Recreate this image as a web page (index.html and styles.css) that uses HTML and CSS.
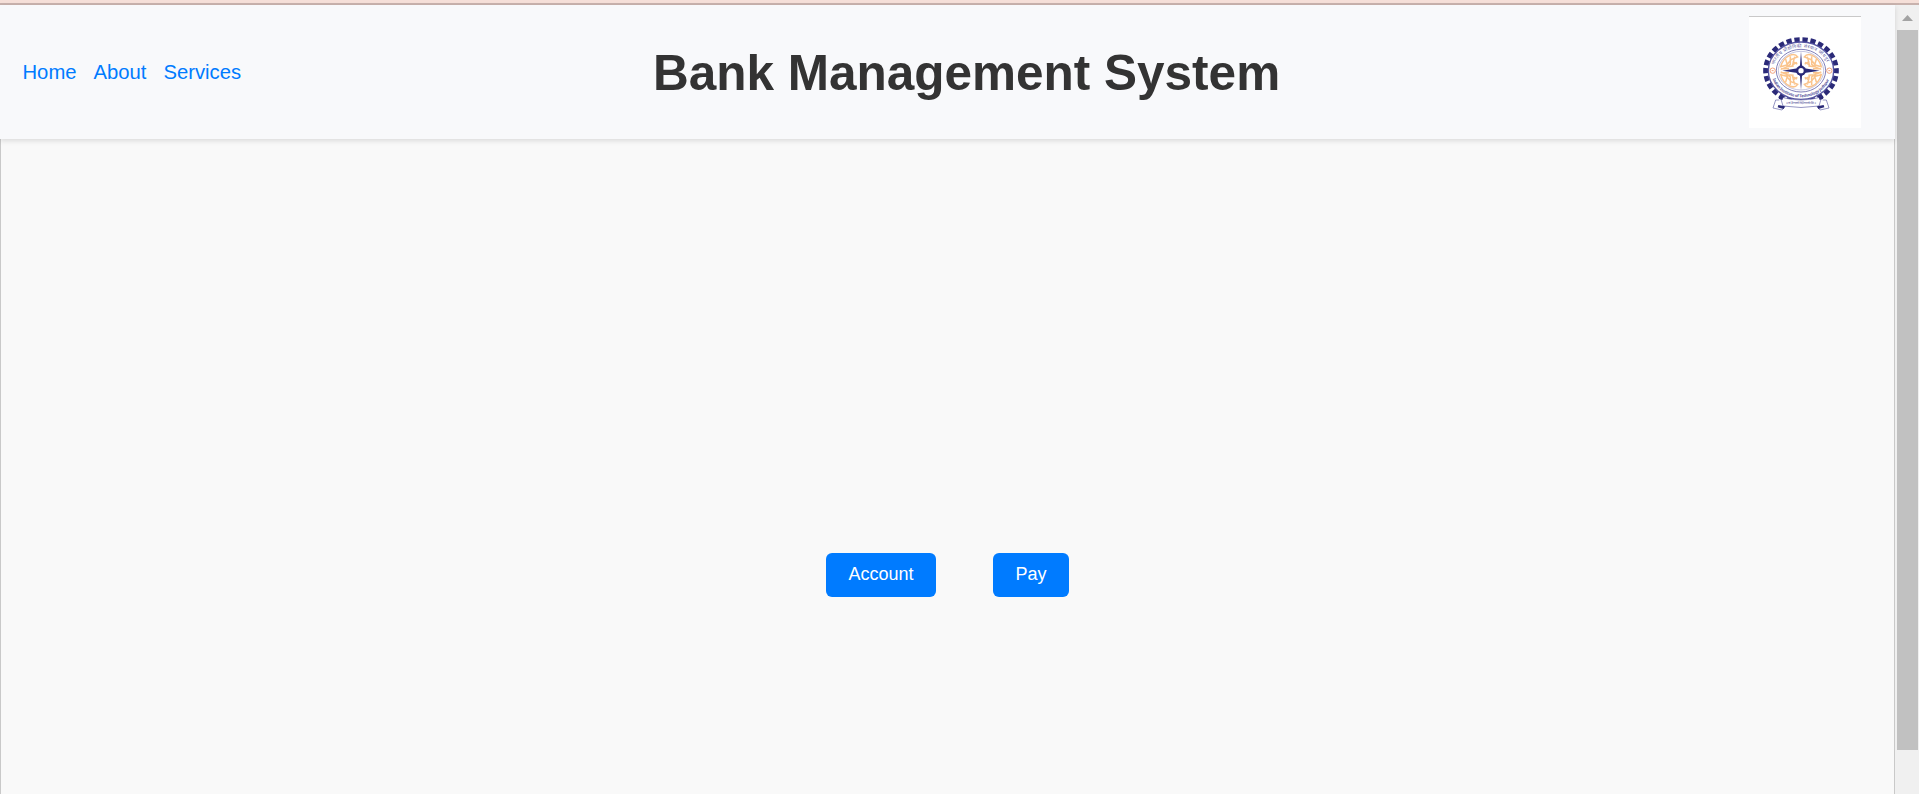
FILE: index.html
```html
<!DOCTYPE html>
<html lang="en">
<head>
<meta charset="utf-8">
<title>Bank Management System</title>
<link rel="stylesheet" href="styles.css">
</head>
<body>
<div class="topline"></div>
<div class="window">
  <div class="page">
    <header class="header">
      <nav class="nav"><a>Home</a><a>About</a><a>Services</a></nav>
      <h1 class="title">Bank Management System</h1>
      <div class="logo">
        <svg viewBox="0 0 336 336" width="112" height="112">
          <defs>
            <path id="arcTop" d="M76 146A82 66 0 0 1 236 146"/>
            <path id="arcBottom" d="M71 188A88 75 0 0 0 241 188"/>
          </defs>
          <rect width="336" height="3" fill="#c9c9c9"/>
          <g fill="none" stroke="#2b2a78">
            <ellipse class="teeth" cx="156" cy="164" rx="106" ry="93" pathLength="104" stroke-width="15"/>
            <ellipse cx="156" cy="164" rx="98" ry="86" stroke-width="4" stroke="#5554a0" fill="#fff"/>
            <ellipse cx="156" cy="164" rx="74" ry="64" stroke-width="2.5" stroke="#6665aa"/>
            <ellipse cx="156" cy="164" rx="68" ry="58" stroke-width="1.5" stroke="#8a89c0"/>
          </g>
          <g fill="none" stroke="#fac48c" stroke-width="4.5">
            <g id="half">
              <path d="M166 123q8-12 24-5q20 9 27 34l-18-5l-13-16zM175 122l6 24l-13-7M188 121l0 24l12 8M202 130l-5 17l20 5M178 150l18 2l21 8M192 158l24 0M181 136l-14 8"/>
              <path d="M166 205q8 12 24 5q20-9 27-34l-18 5l-13 16zM175 206l6-24l-13 7M188 207l0-24l12-8M202 198l-5-17l20-5M178 178l18-2l21-8M192 170l24 0M181 192l-14-8"/>
            </g>
            <use href="#half" transform="matrix(-1 0 0 1 312 0)"/>
          </g>
          <g fill="#2b2a78">
            <path d="M156 106l3 42l7 9l46 7l-46 7l-7 9l-3 42l-3-42l-7-9l-46-7l46-7l7-9z"/>
            <circle cx="156" cy="164" r="15"/>
            <circle cx="156" cy="164" r="8" fill="#fff"/>
          </g>
          <g fill="#fff" stroke="#f2a27c" stroke-width="3">
            <circle cx="71" cy="164" r="8"/><circle cx="241" cy="164" r="8"/>
            <path d="M68 164h6M238 164h6"/>
          </g>
          <text class="seal"><textPath href="#arcTop" textLength="196">भारतीय प्रौद्योगिकी संस्थान जोधपुर</textPath></text>
          <text class="seal latin"><textPath href="#arcBottom" textLength="214">Indian Institute of Technology Jodhpur</textPath></text>
          <g fill="#fff" stroke="#6160a6" stroke-width="2">
            <path d="M91 252l-11 0l-8 24l27 6l10-11"/>
            <path d="M221 252l11 0l8 24l-27 6l-10-11"/>
            <path d="M94 243q62 18 124 0l-8 27q-54 9-108 0z"/>
          </g>
          <path d="M88 267l20 4l-4 8l-18-5zM224 267l-20 4l4 8l18-5zM93 241l10 3l-3 8l-11-4zM219 241l-10 3l3 8l11-4z" fill="#2b2a78"/>
          <text class="motto" x="111" y="265" textLength="90">॥ त्वं ज्ञानमयो विज्ञानमयोऽसि ॥</text>
        </svg>
      </div>
    </header>
    <main class="main">
      <button class="btn">Account</button>
      <button class="btn">Pay</button>
    </main>
  </div>
  <div class="scrollbar">
    <svg class="up" width="11" height="6" viewBox="0 0 11 6"><path d="M0 6L5.5 0L11 6z" fill="#a3a3a3"/></svg>
    <div class="thumb"></div>
  </div>
</div>
</body>
</html>
```
FILE: styles.css
```css
* { box-sizing: border-box; }
body {
  margin: 0;
  height: 794px;
  overflow: hidden;
  display: flex;
  flex-direction: column;
  background: #f9f9f9;
  font-family: "Liberation Sans", Arial, sans-serif;
}
.topline {
  flex: none;
  height: 5px;
  background: #f5dfd8;
  border-bottom: 2px solid #c8b2ad;
}
.window { flex: 1; display: flex; }
.page { flex: 1; display: flex; flex-direction: column; }
.header {
  flex: none;
  height: 134px;
  display: flex;
  align-items: center;
  justify-content: space-between;
  padding: 0 34px 0 22.5px;
  background: #f8f9fb;
  box-shadow: 0 2px 5px rgba(0, 0, 0, 0.12);
  z-index: 1;
}
.nav { display: flex; gap: 17px; font-size: 20.25px; color: #007bff; }
.title {
  margin: 0 57px 0 0;
  padding-top: 2px;
  font-size: 49.5px;
  line-height: 56px;
  color: #333;
}
.logo { width: 112px; height: 112px; background: #fff; }
.logo svg { display: block; }
.teeth { stroke-dasharray: 2.6 1.4; stroke-dashoffset: 1.3; }
.seal { font: 14px "Noto Sans", "Liberation Sans", sans-serif; fill: #55549a; }
.latin { font-size: 12px; font-weight: bold; }
.motto { font: 9px "Noto Sans", sans-serif; fill: #44438f; }
.main {
  flex: 1;
  display: flex;
  justify-content: center;
  align-items: flex-start;
  gap: 57px;
  padding-top: 414px;
  border: 1px solid #c9c9c9;
  border-width: 0 1px;
}
.btn {
  height: 44px;
  padding: 0 22.5px 2px;
  border: 0;
  border-radius: 6px;
  background: #007bff;
  color: #fff;
  font: 18px "Liberation Sans", Arial, sans-serif;
}
.scrollbar {
  width: 24px;
  padding: 10px 1px 0 2px;
  background: #f0f0f0;
  display: flex;
  flex-direction: column;
  align-items: center;
}
.up { margin-bottom: 9px; }
.thumb { width: 21px; height: 720px; background: #c1c1c1; }
```
